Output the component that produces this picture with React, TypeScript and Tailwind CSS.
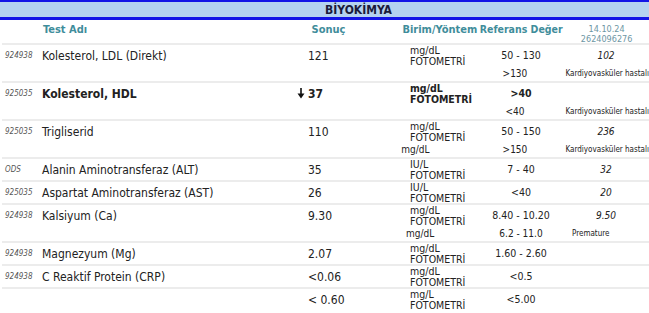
import React from "react";

type Row = {
  code: string;
  name: string;
  result: string;
  unit: [string, string];
  ref: string;
  extra?: string;
  bold?: boolean;
  arrow?: boolean;
  sub?: { unit?: string; ref?: string; extra?: string };
};

const rows: Row[] = [
  {
    code: "924938",
    name: "Kolesterol, LDL (Direkt)",
    result: "121",
    unit: ["mg/dL", "FOTOMETRİ"],
    ref: "50 - 130",
    extra: "102",
    sub: { ref: ">130", extra: "Kardiyovasküler hastalı" },
  },
  {
    code: "925035",
    name: "Kolesterol, HDL",
    result: "37",
    unit: ["mg/dL", "FOTOMETRİ"],
    ref: ">40",
    bold: true,
    arrow: true,
    sub: { ref: "<40", extra: "Kardiyovasküler hastalı" },
  },
  {
    code: "925035",
    name: "Trigliserid",
    result: "110",
    unit: ["mg/dL", "FOTOMETRİ"],
    ref: "50 - 150",
    extra: "236",
    sub: { unit: "mg/dL", ref: ">150", extra: "Kardiyovasküler hastalı" },
  },
  {
    code: "ODS",
    name: "Alanin Aminotransferaz (ALT)",
    result: "35",
    unit: ["IU/L", "FOTOMETRİ"],
    ref: "7 - 40",
    extra: "32",
  },
  {
    code: "925035",
    name: "Aspartat Aminotransferaz (AST)",
    result: "26",
    unit: ["IU/L", "FOTOMETRİ"],
    ref: "<40",
    extra: "20",
  },
  {
    code: "924938",
    name: "Kalsiyum (Ca)",
    result: "9.30",
    unit: ["mg/dL", "FOTOMETRİ"],
    ref: "8.40 - 10.20",
    extra: "9.50",
    sub: { unit: "mg/dL", ref: "6.2 - 11.0", extra: "Premature" },
  },
  {
    code: "924938",
    name: "Magnezyum (Mg)",
    result: "2.07",
    unit: ["mg/dL", "FOTOMETRİ"],
    ref: "1.60 - 2.60",
  },
  {
    code: "924938",
    name: "C Reaktif Protein (CRP)",
    result: "<0.06",
    unit: ["mg/dL", "FOTOMETRİ"],
    ref: "<0.5",
  },
  {
    code: "",
    name: "",
    result: "< 0.60",
    unit: ["mg/L", "FOTOMETRİ"],
    ref: "<5.00",
  },
];

function DownArrow() {
  return (
    <svg width="8" height="11" viewBox="0 0 8 11" className="block">
      <rect x="3.2" y="0" width="1.6" height="7" fill="#111" />
      <polygon points="0.5,5.5 7.5,5.5 4,10.5" fill="#111" />
    </svg>
  );
}

function Sep() {
  return <div className="ml-[2px] h-[2px] bg-[#ececec]" />;
}

function TestRow({ r }: { r: Row }) {
  const b = r.bold ? "font-bold" : "";
  return (
    <div>
      <div className="flex h-[21px] items-center text-[#222]">
        <div className="w-[42px] pl-[5px] text-[8px] italic text-[#555]">{r.code}</div>
        <div className={`w-[254px] whitespace-nowrap text-[12px] ${b}`}>{r.name}</div>
        <div className="flex w-[12px] items-center justify-start pl-[1px]">
          {r.arrow ? <DownArrow /> : null}
        </div>
        <div className={`w-[98px] whitespace-nowrap text-[12px] ${b}`}>{r.result}</div>
        <div className={`w-[70px] whitespace-nowrap pl-[4px] text-[10.5px] leading-[11px] text-[#222] ${b}`}>
          <div>{r.unit[0]}</div>
          <div>{r.unit[1]}</div>
        </div>
        <div className={`w-[90px] text-center text-[10.5px] ${b}`}>{r.ref}</div>
        <div className="w-[80px] text-center text-[10px] italic">{r.extra ?? ""}</div>
      </div>
      {r.sub ? (
        <div className="flex h-[15px] items-center text-[#222]">
          <div className="w-[406px]" />
          <div className="w-[70px] text-[10px]">{r.sub.unit ?? ""}</div>
          <div className="w-[90px] text-center text-[10px]">{r.sub.ref ?? ""}</div>
          <div className="flex-1 whitespace-nowrap pl-[6px] text-[8px]">{r.sub.extra ?? ""}</div>
        </div>
      ) : null}
    </div>
  );
}

export default function App() {
  return (
    <div
      className="h-[313px] w-[649px] overflow-hidden bg-white"
      style={{ fontFamily: '"DejaVu Sans Condensed", "DejaVu Sans", Tahoma, sans-serif' }}
    >
      <div className="border-b-[3px] border-t-[2px] border-[#1414e6] bg-[#b5d2f0]">
        <div className="flex h-[15px] items-center pl-[325px] text-[12px] font-bold text-[#1b1b3c]">
          BİYOKİMYA
        </div>
      </div>
      <div className="flex h-[23px] items-start pt-[2px] text-[11px] font-bold text-[#3f8d9b]">
        <div className="w-[43px]" />
        <div className="w-[269px]">Test Adı</div>
        <div className="w-[91px]">Sonuç</div>
        <div className="w-[76px] whitespace-nowrap">Birim/Yöntem</div>
        <div className="w-[86px] whitespace-nowrap text-center text-[10.5px]">Referans Değer</div>
        <div className="w-[85px] pt-[2px] text-center text-[9px] font-normal leading-[10px] text-[#6d96a4]">
          <div>14.10.24</div>
          <div>2624096276</div>
        </div>
      </div>
      <Sep />
      {rows.map((r, i) => (
        <React.Fragment key={i}>
          <TestRow r={r} />
          {i < rows.length - 1 ? <Sep /> : null}
        </React.Fragment>
      ))}
    </div>
  );
}
